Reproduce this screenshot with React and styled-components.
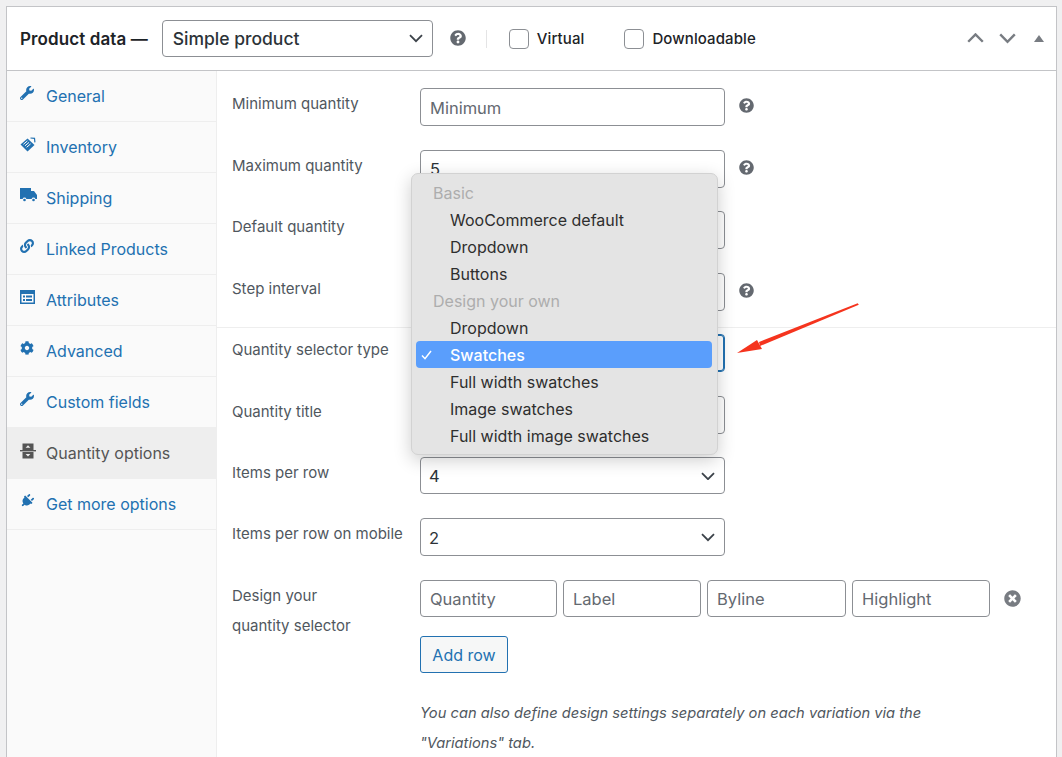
import React from 'react';
import styled, { createGlobalStyle } from 'styled-components';
import { FaWrench, FaLink, FaCog, FaPlug, FaQuestionCircle, FaTimesCircle } from 'react-icons/fa';

const GlobalStyle = createGlobalStyle`
  html, body {
    margin: 0;
    height: 100%;
    overflow: hidden;
    background: #f0f0f1;
    font-family: Inter, "Liberation Sans", sans-serif;
  }
  * { box-sizing: border-box; }
`;

const Page = styled.div`
  height: 757px;
  padding: 6px 5px 0 6px;
  position: relative;
  overflow: hidden;
`;

const Box = styled.div`
  height: 100%;
  background: #fff;
  border: 1px solid #c3c4c7;
  border-bottom: none;
  display: flex;
  flex-direction: column;
`;

const Header = styled.div`
  height: 64px;
  flex: none;
  display: flex;
  align-items: center;
  padding: 0 12px 0 13px;
  border-bottom: 1px solid #c3c4c7;
  color: #1d2327;
`;

const Title = styled.span`
  font-size: 17px;
  font-weight: 600;
  letter-spacing: 0.1px;
  margin-right: 14px;
`;

const SelectBox = styled.div`
  width: ${(p) => p.$width || 305}px;
  height: ${(p) => p.$height || 38}px;
  display: flex;
  align-items: center;
  justify-content: space-between;
  padding: ${(p) => (p.$strong ? '0 9px 0 10px' : '1px 9px 0 8px')};
  background: #fff;
  border: 1px solid ${(p) => (p.$focus ? '#2271b1' : '#8c8f94')};
  box-shadow: ${(p) => (p.$focus ? 'inset 0 0 0 1px #2271b1' : 'none')};
  border-radius: 4px;
  font-size: ${(p) => (p.$strong ? 17.5 : 16.5)}px;
  font-weight: ${(p) => (p.$strong ? 500 : 400)};
  color: #2c3338;
`;

const HeaderHelp = styled.span`
  display: flex;
  margin: 0 0 2px 17px;
  color: #646970;
  font-size: 16px;
`;

const Separator = styled.span`
  width: 1px;
  height: 18px;
  margin: 0 21px 0 20px;
  background: #e4e4e5;
`;

const CheckLabel = styled.label`
  display: flex;
  align-items: center;
  gap: 8px;
  margin-left: ${(p) => p.$indent || 0}px;
  margin-right: 40px;
  font-size: 15px;
  font-weight: 500;
  letter-spacing: 0.1px;
`;

const CheckBox = styled.span`
  width: 20px;
  height: 20px;
  border: 1px solid #8c8f94;
  border-radius: 4px;
  background: #fff;
`;

const Handles = styled.div`
  margin-left: auto;
  display: flex;
  align-items: center;
  gap: 15px;
  color: #787c82;
`;

const Collapse = styled.svg`
  margin-left: 3px;
`;

const Body = styled.div`
  flex: 1;
  display: flex;
  min-height: 0;
`;

const Sidebar = styled.ul`
  width: 210px;
  flex: none;
  margin: 0;
  padding: 0;
  list-style: none;
  background: #fafafa;
  border-right: 1px solid #eee;
`;

const Tab = styled.li`
  height: 51px;
  display: flex;
  align-items: center;
  padding: 0 0 0 13px;
  font-size: 16px;
  border-bottom: 1px solid #eee;
  color: ${(p) => (p.$active ? '#555' : '#2271b1')};
  background: ${(p) => (p.$active ? '#eee' : 'transparent')};
`;

const TabIcon = styled.span`
  width: 26px;
  height: 20px;
  flex: none;
  display: flex;
  align-items: flex-start;
  font-size: 14px;
`;

const Content = styled.div`
  flex: 1;
  min-width: 0;
`;

const Group = styled.div`
  padding: ${(p) => (p.$first ? '17px 0 16.5px' : '6px 0 0')};
  border-top: ${(p) => (p.$first ? 'none' : '1px solid #eee')};
`;

const Row = styled.div`
  display: flex;
  align-items: flex-start;
  padding-left: 15px;
  margin-bottom: ${(p) => p.$gap ?? 23.5}px;
`;

const Label = styled.div`
  width: 188px;
  flex: none;
  margin-top: 1px;
  font-size: 15px;
  line-height: 30px;
  color: #50575e;
`;

const TextInput = styled.input`
  width: ${(p) => (p.$fluid ? '100%' : '305px')};
  min-width: 0;
  height: ${(p) => p.$height || 38}px;
  padding: 1px 9px 0;
  border: 1px solid #8c8f94;
  border-radius: 4px;
  background: #fff;
  font: 400 16.5px Inter, "Liberation Sans", sans-serif;
  color: #2c3338;
  &::placeholder { color: #646970; opacity: 1; }
`;

const Help = styled.span`
  display: flex;
  margin: 10px 0 0 14px;
  color: #646970;
  font-size: 15px;
`;

const DesignColumn = styled.div`
  width: 570px;
  flex: none;
`;

const DesignInputs = styled.div`
  display: grid;
  grid-template-columns: 137px 138px 139px 138px;
  gap: 6px;
`;

const RemoveIcon = styled.span`
  display: flex;
  margin: 10px 0 0 14px;
  color: #787c82;
  font-size: 17px;
`;

const AddButton = styled.button`
  display: block;
  width: 88px;
  height: 37px;
  margin-top: 19.5px;
  padding: 0;
  border: 1px solid #2271b1;
  border-radius: 3px;
  background: #f6f7f7;
  color: #2271b1;
  font: 400 16px Inter, "Liberation Sans", sans-serif;
`;

const Note = styled.p`
  margin: 25px 0 0;
  font-size: 14.7px;
  font-style: italic;
  line-height: 30px;
  color: #50575e;
  white-space: nowrap;
`;

const Menu = styled.div`
  position: absolute;
  left: 411px;
  top: 173px;
  width: 307px;
  height: 282px;
  padding: 6px 5px 6px 4px;
  background: #e4e4e4;
  border: 1px solid #d2d2d2;
  border-radius: 7px;
  box-shadow: 0 5px 18px rgba(0, 0, 0, 0.2);
  font-size: 16px;
`;

const MenuHeading = styled.div`
  height: 27px;
  line-height: 27px;
  padding-left: 17px;
  color: #adadad;
`;

const MenuItem = styled.div`
  height: 27px;
  line-height: ${(p) => (p.$selected ? 29 : 27)}px;
  margin: ${(p) => (p.$selected ? '-1px 0 1px' : '0')};
  padding-left: 34px;
  position: relative;
  border-radius: 4px;
  color: ${(p) => (p.$selected ? '#fff' : '#2e2e2e')};
  background: ${(p) => (p.$selected ? '#5a9efc' : 'transparent')};
  font-weight: ${(p) => (p.$selected ? 500 : 400)};
`;

const CheckMark = styled.svg`
  position: absolute;
  left: 5px;
  top: 9px;
`;

const Arrow = styled.svg`
  position: absolute;
  left: 730px;
  top: 295px;
`;

const Chevron = ({ size = 14, up, color = '#50575e', stroke = 1.8 }) => (
  <svg width={size} height={size * 0.6} viewBox="0 0 14 8" fill="none">
    <path d={up ? 'M1 7l6-6 6 6' : 'M1 1l6 6 6-6'} stroke={color} strokeWidth={stroke} />
  </svg>
);

const InventoryIcon = () => (
  <svg width="16" height="16" viewBox="0 0 16 16" fill="currentColor">
    <path d="M0.5 7.5L7.5 1.5l7 6.5-7 6.5z" />
    <path d="M3.4 7.3l4-3.4M5 8.8l4-3.4M6.6 10.3l4-3.4" stroke="#fafafa" strokeWidth="1" />
    <path d="M10.5 1l4 0.4 0.4 4" fill="none" stroke="currentColor" strokeWidth="1.2" />
  </svg>
);

const ShippingIcon = () => (
  <svg width="17" height="14" viewBox="0 0 17 14" fill="currentColor">
    <path d="M0 0h11v3h3l3 4v4h-1.6a2 2 0 0 0-3.8 0H6.4a2 2 0 0 0-3.8 0H0z" />
    <circle cx="4.5" cy="12" r="1.3" />
    <circle cx="13.5" cy="12" r="1.3" />
  </svg>
);

const AttributesIcon = () => (
  <svg width="15" height="14" viewBox="0 0 15 14">
    <path fill="currentColor" d="M0 0h15v14H0z" />
    <path fill="#fafafa" d="M1.5 4h12v8.5h-12z" />
    <path fill="currentColor" d="M3 5.5h2v2H3zM3 9h2v2H3zM6 5.5h6v2H6zM6 9h6v2H6z" />
  </svg>
);

const QuantityIcon = () => (
  <svg width="16" height="16" viewBox="0 0 16 16" fill="currentColor">
    <path d="M2.5 0.5h11v6.5h-11zM2.5 9h11v6.5h-11z" />
    <path d="M0 7h16v1.4H0z" />
    <path fill="#eee" d="M8 2.2l2.4 2.6H5.6zM8 13.6l-2.4-2.6h4.8z" />
  </svg>
);

const tabs = [
  { label: 'General', icon: <FaWrench /> },
  { label: 'Inventory', icon: <InventoryIcon /> },
  { label: 'Shipping', icon: <ShippingIcon /> },
  { label: 'Linked Products', icon: <FaLink /> },
  { label: 'Attributes', icon: <AttributesIcon /> },
  { label: 'Advanced', icon: <FaCog /> },
  { label: 'Custom fields', icon: <FaWrench /> },
  { label: 'Quantity options', icon: <QuantityIcon />, active: true },
  { label: 'Get more options', icon: <FaPlug style={{ transform: 'rotate(45deg)' }} /> },
];

export default function App() {
  return (
    <Page>
      <GlobalStyle />
      <Box>
        <Header>
          <Title>Product data —</Title>
          <SelectBox $width={271} $height={37} $strong>
            Simple product
            <Chevron color="#3c434a" />
          </SelectBox>
          <HeaderHelp><FaQuestionCircle /></HeaderHelp>
          <Separator />
          <CheckLabel $indent={1}><CheckBox />Virtual</CheckLabel>
          <CheckLabel><CheckBox />Downloadable</CheckLabel>
          <Handles>
            <Chevron size={17} up color="#787c82" stroke={2} />
            <Chevron size={17} color="#787c82" stroke={2} />
            <Collapse width="10" height="7" viewBox="0 0 10 7"><path d="M5 0l5 7H0z" fill="#787c82" /></Collapse>
          </Handles>
        </Header>
        <Body>
          <Sidebar>
            {tabs.map((t) => (
              <Tab key={t.label} $active={t.active}>
                <TabIcon>{t.icon}</TabIcon>
                {t.label}
              </Tab>
            ))}
          </Sidebar>
          <Content>
            <Group $first>
              <Row>
                <Label>Minimum quantity</Label>
                <TextInput placeholder="Minimum" />
                <Help><FaQuestionCircle /></Help>
              </Row>
              <Row>
                <Label>Maximum quantity</Label>
                <TextInput defaultValue="5" />
                <Help><FaQuestionCircle /></Help>
              </Row>
              <Row>
                <Label>Default quantity</Label>
                <TextInput />
              </Row>
              <Row $gap={0}>
                <Label>Step interval</Label>
                <TextInput />
                <Help><FaQuestionCircle /></Help>
              </Row>
            </Group>
            <Group>
              <Row>
                <Label>Quantity selector type</Label>
                <SelectBox $focus />
              </Row>
              <Row>
                <Label>Quantity title</Label>
                <TextInput />
              </Row>
              <Row $gap={24}>
                <Label>Items per row</Label>
                <SelectBox $height={37}>
                  4
                  <Chevron color="#3c434a" />
                </SelectBox>
              </Row>
              <Row>
                <Label>Items per row on mobile</Label>
                <SelectBox>
                  2
                  <Chevron color="#3c434a" />
                </SelectBox>
              </Row>
              <Row>
                <Label>Design your<br />quantity selector</Label>
                <DesignColumn>
                  <DesignInputs>
                    <TextInput $fluid $height={37} placeholder="Quantity" />
                    <TextInput $fluid $height={37} placeholder="Label" />
                    <TextInput $fluid $height={37} placeholder="Byline" />
                    <TextInput $fluid $height={37} placeholder="Highlight" />
                  </DesignInputs>
                  <AddButton>Add row</AddButton>
                  <Note>
                    You can also define design settings separately on each variation via the<br />
                    "Variations" tab.
                  </Note>
                </DesignColumn>
                <RemoveIcon><FaTimesCircle /></RemoveIcon>
              </Row>
            </Group>
          </Content>
        </Body>
      </Box>
      <Menu>
        <MenuHeading>Basic</MenuHeading>
        <MenuItem>WooCommerce default</MenuItem>
        <MenuItem>Dropdown</MenuItem>
        <MenuItem>Buttons</MenuItem>
        <MenuHeading>Design your own</MenuHeading>
        <MenuItem>Dropdown</MenuItem>
        <MenuItem $selected>
          <CheckMark width="11" height="10" viewBox="0 0 11 10" fill="none">
            <path d="M1 5.5l3 3.2L10 1" stroke="#fff" strokeWidth="1.5" />
          </CheckMark>
          Swatches
        </MenuItem>
        <MenuItem>Full width swatches</MenuItem>
        <MenuItem>Image swatches</MenuItem>
        <MenuItem>Full width image swatches</MenuItem>
      </Menu>
      <Arrow width="135" height="65" viewBox="0 0 135 65">
        <path d="M127.7 8.2L128.8 9.8L30 51L29 47z" fill="#f5341e" />
        <path d="M7 58L27 45l5 9z" fill="#f5341e" />
      </Arrow>
    </Page>
  );
}
